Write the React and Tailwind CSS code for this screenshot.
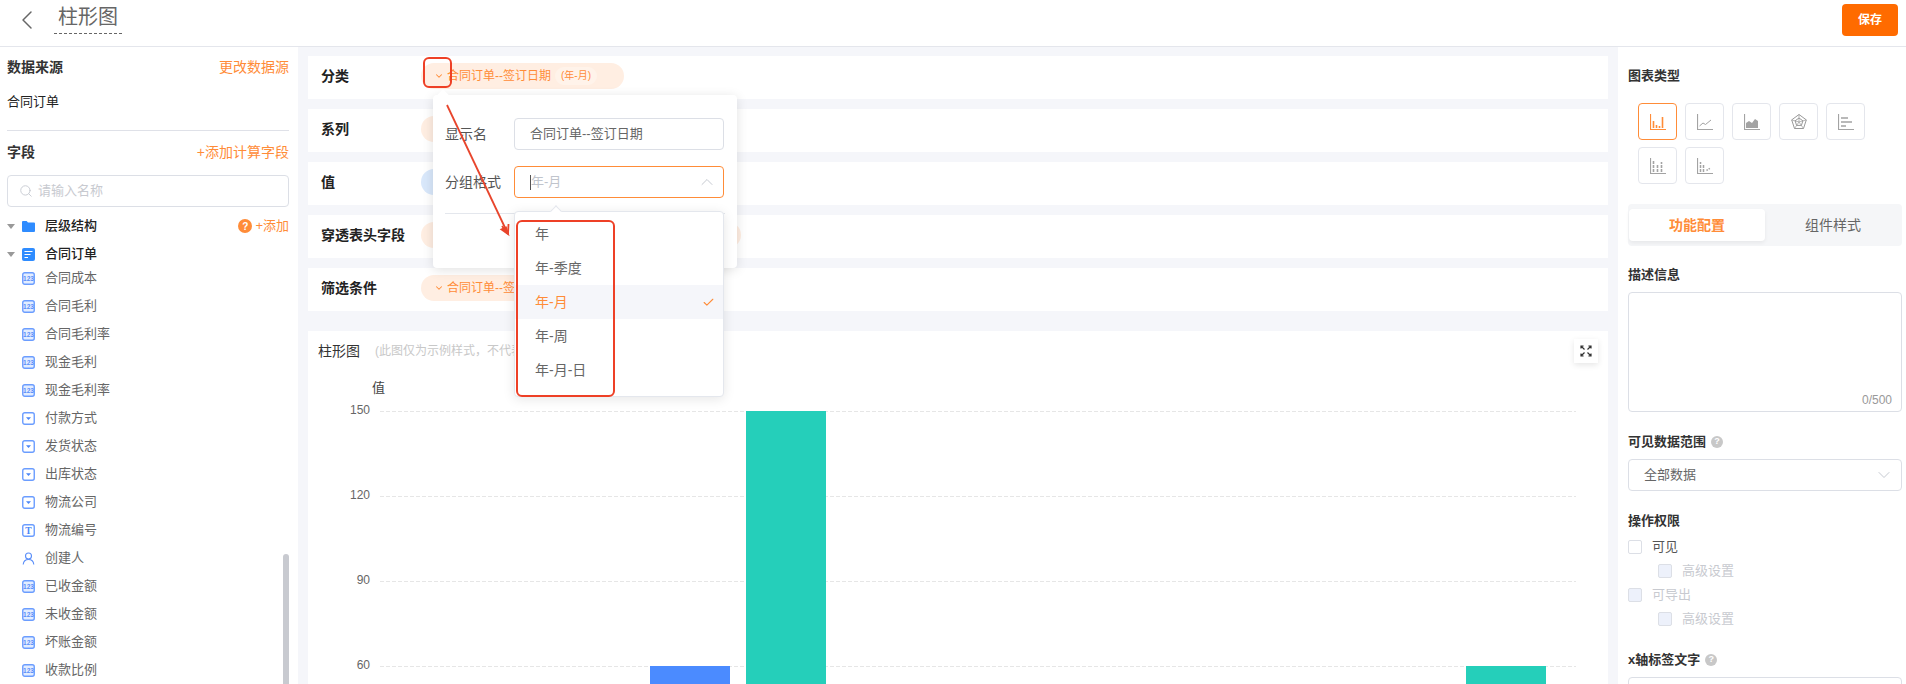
import { ChevronLeft, ChevronDown, ChevronUp, Check, Search } from 'lucide-react'

const FIELDS = [
  ['num', '合同成本'],
  ['num', '合同毛利'],
  ['num', '合同毛利率'],
  ['num', '现金毛利'],
  ['num', '现金毛利率'],
  ['sel', '付款方式'],
  ['sel', '发货状态'],
  ['sel', '出库状态'],
  ['sel', '物流公司'],
  ['text', '物流编号'],
  ['user', '创建人'],
  ['num', '已收金额'],
  ['num', '未收金额'],
  ['num', '坏账金额'],
  ['num', '收款比例'],
]

const FORMATS = ['年', '年-季度', '年-月', '年-周', '年-月-日']

function FieldIcon({ type }) {
  if (type === 'user') {
    return (
      <svg width="13" height="13" viewBox="0 0 13 13" fill="none" stroke="#5b8ff9" strokeWidth="1.1">
        <circle cx="6.5" cy="4" r="3" />
        <path d="M1.2 12.5c.3-3 2.4-5 5.3-5s5 2 5.3 5" />
      </svg>
    )
  }
  return (
    <svg width="13" height="13" viewBox="0 0 13 13" fill="none">
      <rect x="0.75" y="0.75" width="11.5" height="11.5" rx="2" stroke="#6b9dff" strokeWidth="1.4" fill={type === 'num' ? '#e3edff' : 'white'} />
      {type === 'num' && (
        <text x="6.5" y="8.8" textAnchor="middle" fontSize="6.5" fontWeight="700" fill="#5b8ff9" fontFamily="Liberation Sans">123</text>
      )}
      {type === 'sel' && <path d="M4 5.2h5L6.5 8z" fill="#4a86f7" />}
      {type === 'text' && (
        <text x="6.5" y="10" textAnchor="middle" fontSize="9.5" fontWeight="700" fill="#4a86f7" fontFamily="Liberation Serif">T</text>
      )}
    </svg>
  )
}

function Caret() {
  return <span className="w-0 h-0 border-x-[4.5px] border-x-transparent border-t-[5px] border-t-[#999]" />
}

function TreeHead({ icon, label, children, className }) {
  return (
    <div className={`flex items-center ${className}`}>
      <Caret />
      <span className="ml-[6px] w-[14px] flex justify-center">{icon}</span>
      <span className="ml-[10px] text-[13px] text-[#222] font-medium">{label}</span>
      {children}
    </div>
  )
}

function LeftPanel() {
  return (
    <aside className="relative w-[298px] shrink-0 bg-white overflow-hidden pl-[7px] pr-[9px] pt-[10px]">
      <div className="flex items-center justify-between h-5">
        <span className="text-sm font-semibold text-[#333]">数据来源</span>
        <span className="text-sm text-[#ff8c38]">更改数据源</span>
      </div>
      <div className="mt-[15px] h-5 flex items-center text-[13px] text-[#222]">合同订单</div>
      <div className="mt-[18px] h-px bg-[#dfe1e8]" />
      <div className="mt-[11px] flex items-center justify-between h-5">
        <span className="text-sm font-semibold text-[#333]">字段</span>
        <span className="text-sm text-[#ff8c38]">+添加计算字段</span>
      </div>
      <div className="mt-[13px] h-8 border border-[#dcdfe6] rounded flex items-center pl-[11px] gap-[5px]">
        <Search size={14} color="#c4c7cf" strokeWidth={1.5} />
        <span className="text-[13px] text-[#c8cad0]">请输入名称</span>
      </div>
      <TreeHead
        className="mt-[5px] h-7"
        label="层级结构"
        icon={
          <svg width="13" height="12" viewBox="0 0 13 12">
            <path d="M0 2a1 1 0 0 1 1-1h3.6l1.4 1.6h6a1 1 0 0 1 1 1V11a1 1 0 0 1-1 1H1a1 1 0 0 1-1-1z" fill="#2f8cff" />
          </svg>
        }
      >
        <span className="ml-auto flex items-center gap-[3px] text-[13px] text-[#ff8c38]">
          <span className="w-[14px] h-[14px] rounded-full bg-[#ff8c38] text-white text-[10px] font-bold flex items-center justify-center">?</span>
          +添加
        </span>
      </TreeHead>
      <TreeHead
        className="mt-1 h-5"
        label="合同订单"
        icon={
          <svg width="13" height="13" viewBox="0 0 13 13">
            <rect width="13" height="13" rx="2" fill="#2f8cff" />
            <path d="M2.5 3.5h8M2.5 6.5h6M2.5 9.5h3.5" stroke="white" strokeWidth="1.2" />
          </svg>
        }
      />
      <div>
        {FIELDS.map(([type, name]) => (
          <div key={name} className="h-7 flex items-center pl-[15px]">
            <span className="flex w-[13px]">
              <FieldIcon type={type} />
            </span>
            <span className="ml-[10px] text-[13px] text-[#666]">{name}</span>
          </div>
        ))}
      </div>
      <div className="absolute right-[9px] top-[507px] w-[6px] h-[200px] rounded-full bg-[#c8cad0]" />
    </aside>
  )
}

function Pill({ tone = 'orange', width, subtitle, label }) {
  const bg = tone === 'blue' ? 'bg-[#d9e8fb] text-[#4a86f7]' : 'bg-[#ffeee2] text-[#ff8c38]'
  return (
    <div className={`h-[26px] rounded-full flex items-center pl-[13px] ${bg}`} style={{ width }}>
      <ChevronDown size={10} strokeWidth={2.5} />
      {label && <span className="ml-[3px] text-xs whitespace-nowrap">{label}</span>}
      {subtitle && (
        <span className="ml-[4px] h-[18px] px-[6px] rounded-full bg-[#fff3ea] text-[10px] flex items-center whitespace-nowrap">{subtitle}</span>
      )}
    </div>
  )
}

function ConfigRow({ label, children }) {
  return (
    <div className="h-[43px] bg-white flex items-center pl-[13px] pb-1">
      <span className="w-[100px] text-sm font-semibold text-[#222]">{label}</span>
      {children}
    </div>
  )
}

function BarChart() {
  const ticks = [
    [150, 50],
    [120, 135],
    [90, 220],
    [60, 305],
  ]
  return (
    <svg width="1300" height="323" className="block">
      <text x="64" y="31" fontSize="13" fill="#444">值</text>
      {ticks.map(([value, y]) => (
        <g key={value}>
          <line x1="72" x2="1268" y1={y + 0.5} y2={y + 0.5} stroke="#e6e6e6" strokeDasharray="4 2" />
          <text x="62" y={y + 3} textAnchor="end" fontSize="12" fill="#666">{value}</text>
        </g>
      ))}
      <rect x="342" y="305" width="80" height="20" fill="#4b8bff" />
      <rect x="438" y="50" width="80" height="275" fill="#25cfba" />
      <rect x="1158" y="305" width="80" height="20" fill="#25cfba" />
    </svg>
  )
}

function CenterPanel() {
  return (
    <main className="flex-1 min-w-0 px-[10px] pt-[9px] overflow-hidden">
      <div className="flex flex-col gap-[10px]">
        <ConfigRow label="分类">
          <Pill width={203} label="合同订单--签订日期" subtitle="(年-月)" />
        </ConfigRow>
        <ConfigRow label="系列">
          <Pill width={220} />
        </ConfigRow>
        <ConfigRow label="值">
          <Pill tone="blue" width={220} />
        </ConfigRow>
        <ConfigRow label="穿透表头字段">
          <Pill width={320} />
        </ConfigRow>
        <ConfigRow label="筛选条件">
          <Pill width={220} label="合同订单--签订日期" />
        </ConfigRow>
      </div>
      <section className="relative mt-5 bg-white h-[400px]">
        <div className="pt-[10px] pl-[10px] h-[30px] flex items-center gap-[15px]">
          <span className="text-sm text-[#333]">柱形图</span>
          <span className="text-xs text-[#c8c8c8]">(此图仅为示例样式，不代表实际数据)</span>
        </div>
        <BarChart />
        <button className="absolute right-[10px] top-2 w-6 h-6 bg-white shadow-[0_2px_6px_rgba(0,0,0,0.1)] flex items-center justify-center">
          <svg width="12" height="12" viewBox="0 0 12 12" fill="none" stroke="#333" strokeWidth="1.2">
            <path d="M4.5 4.5 1 1M1 3.6V1h2.6M7.5 4.5 11 1M8.4 1H11v2.6M4.5 7.5 1 11M1 8.4V11h2.6M7.5 7.5 11 11M8.4 11H11V8.4" />
          </svg>
        </button>
      </section>
    </main>
  )
}

function ChartTypeIcon({ kind, color }) {
  return (
    <svg width="16" height="16" viewBox="0 0 16 16" fill="none" stroke={color} strokeWidth="1">
      <path d="M.5 0v15.5H16" strokeWidth="1.2" />
      {kind === 'bar' && <path d="M3.5 14V7M6.5 14v-3M9.5 14v-2M12.5 14V3" strokeWidth="1.6" />}
      {kind === 'line' && <path d="M2.5 12l3.5-3 2.5 1.5L14 6" />}
      {kind === 'area' && <path d="M2 14V9l3-2 3 2 3-4 3 2v7z" fill={color} stroke="none" />}
      {kind === 'bars' && <path d="M3 4h7M3 8h11M3 12h5" strokeWidth="1.3" />}
      {kind === 'stack' && <path d="M3.5 14V3M7.5 14V6M11.5 14V4" strokeWidth="1.6" strokeDasharray="3 1" />}
      {kind === 'percent' && <path d="M3.5 14V4M6.5 14V7" strokeWidth="1.5" strokeDasharray="3 1" />}
      {kind === 'percent' && <path d="M9.5 12.5l4-2.5" strokeWidth="1.5" strokeDasharray="1.5 1" />}
    </svg>
  )
}

function RadarIcon() {
  return (
    <svg width="16" height="16" viewBox="0 0 16 16" fill="none" stroke="#999" strokeWidth="1">
      <path d="M8 .5l7.3 5.4-2.8 8.6h-9L.7 5.9z" />
      <path d="M8 4l3.9 2.8-1.5 4.6H5.6L4.1 6.8z" />
      <path d="M8 .5V8M15.3 5.9 8 8M12.5 14.5 8 8M3.5 14.5 8 8M.7 5.9 8 8" strokeWidth="0.7" />
    </svg>
  )
}

function Checkbox({ label, disabled, indent }) {
  return (
    <div className={`h-6 flex items-center ${indent ? 'pl-[30px]' : ''}`}>
      <span className={`w-[14px] h-[14px] rounded-[2px] border border-[#dcdfe6] ${disabled ? 'bg-[#edf1fb]' : 'bg-white'}`} />
      <span className={`ml-[10px] text-[13px] ${disabled ? 'text-[#c8cad0]' : 'text-[#555]'}`}>{label}</span>
    </div>
  )
}

function Help() {
  return (
    <span className="w-3 h-3 rounded-full bg-[#c8c8c8] text-white text-[9px] font-bold flex items-center justify-center">?</span>
  )
}

function RightPanel() {
  const btn = 'w-[39px] h-[37px] rounded bg-white flex items-center justify-center'
  const head = 'h-5 flex items-center gap-[5px] text-[13px] font-semibold text-[#333]'
  return (
    <aside className="w-[288px] shrink-0 bg-white pl-[10px] pr-1 pt-[19px] overflow-hidden">
      <div className={head}>图表类型</div>
      <div className="mt-[17px] ml-[10px] w-[240px] flex flex-wrap gap-x-2 gap-y-[7px]">
        <span className={`${btn} border border-[#ff8c38]`}><ChartTypeIcon kind="bar" color="#ff8c38" /></span>
        {['line', 'area', 'radar', 'bars', 'stack', 'percent'].map((kind) => (
          <span key={kind} className={`${btn} border border-[#e4e6ec]`}>
            {kind === 'radar' ? <RadarIcon /> : <ChartTypeIcon kind={kind} color="#a3a3a3" />}
          </span>
        ))}
      </div>
      <div className="mt-5 h-[42px] bg-[#f5f6f8] rounded px-px py-[5px] flex">
        <div className="w-[136px] h-8 rounded bg-white shadow-[0_2px_4px_rgba(0,0,0,0.06)] flex items-center justify-center text-sm font-semibold text-[#ff8c38]">功能配置</div>
        <div className="flex-1 flex items-center justify-center text-sm text-[#666]">组件样式</div>
      </div>
      <div className={`${head} mt-[19px]`}>描述信息</div>
      <div className="mt-[7px] h-[120px] border border-[#dcdfe6] rounded flex items-end justify-end pr-[9px] pb-[3px] text-xs text-[#999]">0/500</div>
      <div className={`${head} mt-5`}>可见数据范围 <Help /></div>
      <div className="mt-[7px] h-8 border border-[#dcdfe6] rounded flex items-center justify-between pl-[15px] pr-[7px] text-[13px] text-[#666]">
        全部数据
        <ChevronDown size={20} color="#c0c4cc" strokeWidth={1.1} />
      </div>
      <div className={`${head} mt-5`}>操作权限</div>
      <div className="mt-1">
        <Checkbox label="可见" />
        <Checkbox label="高级设置" disabled indent />
        <Checkbox label="可导出" disabled />
        <Checkbox label="高级设置" disabled indent />
      </div>
      <div className={`${head} mt-[19px]`}>x轴标签文字 <Help /></div>
      <div className="mt-[7px] h-8 border border-[#dcdfe6] rounded" />
    </aside>
  )
}

function GroupPopover() {
  return (
    <div className="absolute left-[433px] top-[95px] w-[304px] h-[173px] bg-white rounded shadow-[0_2px_12px_rgba(0,0,0,0.12)] pt-[23px]">
      <span className="absolute left-[6px] -top-[4px] w-2 h-2 rotate-45 bg-white" />
      <div className="flex items-center pl-3">
        <span className="w-[69px] text-sm text-[#555]">显示名</span>
        <div className="w-[210px] h-8 border border-[#dcdfe6] rounded flex items-center pl-[15px] text-[13px] text-[#666]">合同订单--签订日期</div>
      </div>
      <div className="mt-4 flex items-center pl-3">
        <span className="w-[69px] text-sm text-[#555]">分组格式</span>
        <div className="w-[210px] h-8 border border-[#ff8c38] rounded flex items-center justify-between pl-[15px] pr-[6px] text-[13px] text-[#c0c4cc]">
          <span className="flex items-center">
            <span className="w-px h-[15px] bg-[#555]" />
            年-月
          </span>
          <ChevronUp size={20} color="#c0c4cc" strokeWidth={1.1} />
        </div>
      </div>
      <div className="mt-[15px] mx-3 h-px bg-[#e4e7ed]" />
    </div>
  )
}

function FormatDropdown() {
  return (
    <div className="absolute left-[514px] top-[211px] w-[210px] h-[186px] bg-white border border-[#e4e7ed] rounded shadow-[0_2px_12px_rgba(0,0,0,0.1)] py-[5px]">
      <span className="absolute left-[37px] -top-[5px] w-2 h-2 rotate-45 bg-white border-l border-t border-[#e4e7ed]" />
      {FORMATS.map((item) => {
        const active = item === '年-月'
        return (
          <div key={item} className={`h-[34px] flex items-center justify-between pl-5 pr-2 text-sm ${active ? 'bg-[#f5f6fa] text-[#ff8c38]' : 'text-[#666]'}`}>
            {item}
            {active && <Check size={13} color="#ff8c38" strokeWidth={2} />}
          </div>
        )
      })}
    </div>
  )
}

function Annotations() {
  return (
    <>
      <div className="absolute left-[423px] top-[57px] w-[29px] h-[31px] border-2 border-[#ee4026] rounded-md" />
      <div className="absolute left-[516px] top-[220px] w-[99px] h-[177px] border-2 border-[#ee4026] rounded-md" />
      <svg className="absolute left-[440px] top-[100px]" width="80" height="140" fill="none" stroke="#e8452c" strokeWidth="1.8">
        <path d="M7 5 68 134" />
        <path d="M68 134l-6.5-4.5 4.5-2z" fill="#e8452c" />
        <path d="M68 134l-6-8M68 134l.5-10" />
      </svg>
    </>
  )
}

export default function App() {
  return (
    <div className="relative w-[1906px] h-[684px] overflow-hidden bg-[#f5f6fa] flex flex-col font-['Liberation_Sans','Noto_Sans_CJK_SC',sans-serif]">
      <header className="h-[47px] shrink-0 bg-white border-b border-[#e4e6ec] flex items-center justify-between pr-2 pb-[6px]">
        <div className="flex items-center">
          <ChevronLeft className="ml-[11px]" size={32} color="#666" strokeWidth={1.1} />
          <span className="ml-[11px] mb-[3px] px-1 pb-[2px] text-[20px] leading-[28px] text-[#666] border-b border-dashed border-[#666]">柱形图</span>
        </div>
        <button className="w-14 h-8 rounded bg-[#ff6b00] text-white text-xs font-bold">保存</button>
      </header>
      <div className="flex-1 min-h-0 flex">
        <LeftPanel />
        <CenterPanel />
        <RightPanel />
      </div>
      <GroupPopover />
      <FormatDropdown />
      <Annotations />
    </div>
  )
}
